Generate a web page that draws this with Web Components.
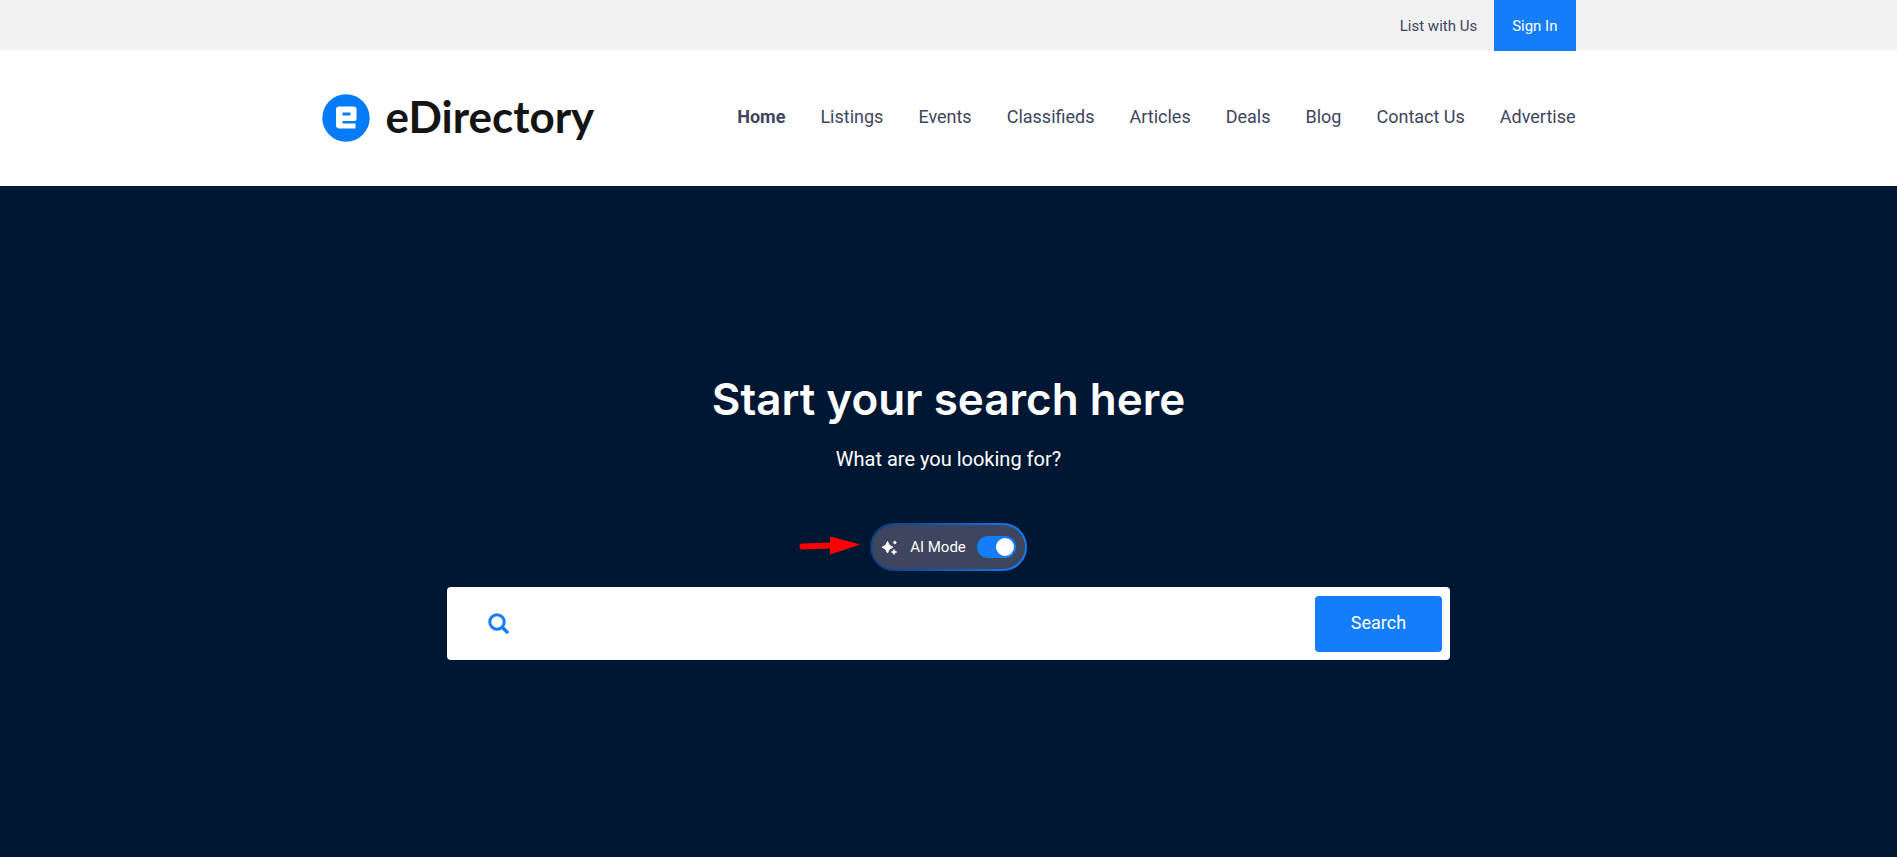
<!DOCTYPE html>
<html lang="en">
<head>
<meta charset="utf-8">
<meta name="viewport" content="width=device-width, initial-scale=1">
<title>eDirectory</title>
<style>
  :root { --blue: #147dfa; --navy: #001733; --slate: #3e455e; --page-width: 1254px; }
  body { margin: 0; font-family: Roboto, "Liberation Sans", sans-serif; color: var(--slate); background: var(--navy); }
</style>
</head>
<body>
<directory-page></directory-page>
<script>
function define(name, html, setup) {
  const template = document.createElement('template');
  template.innerHTML = html;
  customElements.define(name, class extends HTMLElement {
    constructor() {
      super();
      this.attachShadow({ mode: 'open' }).append(template.content.cloneNode(true));
    }
    connectedCallback() { if (setup) setup(this, this.shadowRoot); }
  });
}

define('top-bar', `
<style>
  :host { display: block; background: #f1f1f1; height: 50px; }
  nav { max-width: var(--page-width); margin: 0 auto; display: flex; justify-content: flex-end; align-items: flex-start; gap: 17px; font-size: 15px; line-height: 49px; }
  a { color: inherit; text-decoration: none; padding-top: 2px; }
  .sign { background: var(--blue); color: #fff; padding: 2px 18px 0; }
</style>
<nav aria-label="Account"><a href="#list">List with Us</a><a class="sign" href="#signin">Sign In</a></nav>`);

define('brand-logo', `
<style>
  :host { display: block; }
  a { display: flex; align-items: flex-start; gap: 16px; color: #141414; text-decoration: none; font: 700 44px/44px Lato, sans-serif; }
  svg { display: block; width: 48px; height: 48px; }
</style>
<a href="#home" aria-label="eDirectory">
  <svg viewBox="0 0 48 48" aria-hidden="true"><circle cx="24" cy="24" r="23.7" fill="#047bf8"/>
  <path fill="#fff" fill-rule="evenodd" d="M17 12.500H31.500Q34.500 12.500 34.500 15V25Q34.500 27 32.500 27H20.500V29.500H33.500V34.500H17.500Q14 34.500 14 31V15.500Q14 12.500 17 12.500ZM20.500 18.500V21.500H28.500V18.500Z"/></svg>
  <span>eDirectory</span></a>`);

define('nav-link', `
<style>
  :host { display: block; }
  a { color: inherit; text-decoration: none; white-space: nowrap; }
  :host([current]) a { font-weight: 700; }
</style>
<a><slot></slot></a>`, (host, root) => {
  const a = root.querySelector('a');
  a.href = host.getAttribute('href');
  if (host.hasAttribute('current')) a.setAttribute('aria-current', 'page');
});

define('site-header', `
<style>
  :host { display: block; background: #fff; position: relative; z-index: -1; }
  div { max-width: var(--page-width); margin: 0 auto; padding: 44px 0; display: flex; align-items: center; justify-content: space-between; }
  nav { display: flex; gap: 35px; font-size: 18px; line-height: 24px; padding-bottom: 2px; }
</style>
<div><brand-logo></brand-logo><nav aria-label="Main"><slot></slot></nav></div>`);

define('ai-toggle', `
<style>
  :host { display: block; position: relative; }
  label { display: flex; align-items: center; box-sizing: border-box; height: 48px; padding: 0 9px; border: 2px solid transparent; border-radius: 24px;
    background: linear-gradient(var(--slate), var(--slate)) padding-box, linear-gradient(90deg, #0b3d80, var(--blue)) border-box; color: #fff; font-size: 15px; line-height: 20px; cursor: pointer; }
  .spark { width: 16px; height: 16px; margin-right: 13px; }
  input { appearance: none; margin: 0 0 0 11px; width: 39px; height: 22px; border-radius: 11px; background: #7a8094; display: flex; align-items: center; padding: 2px; box-sizing: border-box; }
  input::before { content: ""; width: 18px; height: 18px; border-radius: 9px; background: #fff; }
  input:checked { background: var(--blue); justify-content: flex-end; }
  .arrow { position: absolute; right: 100%; top: 10px; margin-right: 9px; width: 62px; height: 22px; }
</style>
<svg class="arrow" viewBox="0 0 62 22" aria-hidden="true"><path d="M3.500 13.500L32 12.500" stroke="#f00" stroke-width="6" stroke-linecap="round"/><path d="M31 3.500L61.500 11.500L31 21.500Z" fill="#f00"/></svg>
<label>
  <svg class="spark" viewBox="0 0 16 16" fill="#fff" aria-hidden="true"><path d="M6.500 2.500Q7.500 7.200 12 8.200Q7.500 9.200 6.500 14Q5.500 9.200 1 8.200Q5.500 7.200 6.500 2.500Z" stroke="#fff"/><path d="M13.800 1.500L15.800 3.500L13.800 5.500L11.800 3.500Z"/><path d="M13 10.200Q13.400 12.500 15.800 13Q13.400 13.500 13 15.800Q12.500 13.500 10.200 13Q12.500 12.500 13 10.200Z" stroke="#fff" stroke-width=".5"/></svg>
  <span>AI Mode</span><input type="checkbox" role="switch" checked>
</label>`);

define('search-box', `
<style>
  :host { display: block; width: 100%; max-width: 1003px; }
  form { display: flex; align-items: center; box-sizing: border-box; background: #fff; border-radius: 4px; padding: 8px 8px 8px 41px; height: 73px; }
  svg { width: 21px; height: 21px; flex: none; }
  input { flex: 1; min-width: 0; border: 0; outline: 0; background: none; font: 18px/24px Roboto, sans-serif; color: var(--slate); padding: 0 16px; }
  button { border: 0; border-radius: 4px; background: var(--blue); color: #fff; font: 18px/54px Roboto, sans-serif; width: 127px; padding: 0 0 2px; }
</style>
<form role="search">
  <svg viewBox="0 0 21 21" aria-hidden="true" fill="none" stroke="#147dfa"><circle cx="9" cy="9" r="7.200" stroke-width="3"/><path d="M14.500 14.500L19 19" stroke-width="3.400" stroke-linecap="round"/></svg>
  <input type="text" aria-label="What are you looking for?"><button type="button">Search</button>
</form>`);

define('search-hero', `
<style>
  :host { display: flex; flex-direction: column; align-items: center; flex: 1; background: var(--navy); color: #fff; padding: 189px 24px 64px; box-sizing: border-box; }
  h1 { margin: 0; font: 600 44px/48px Inter, Roboto, sans-serif; text-align: center; }
  p { margin: 24px 0 52px; font-size: 20px; line-height: 24px; }
  search-box { margin-top: 16px; }
</style>
<h1><slot name="title"></slot></h1><p><slot name="lead"></slot></p><ai-toggle></ai-toggle><search-box></search-box>`);

define('directory-page', `
<style>
  :host { display: flex; flex-direction: column; min-height: 100vh; position: relative; z-index: 0; }
</style>
<top-bar></top-bar>
<site-header>
  <nav-link href="#home" current>Home</nav-link><nav-link href="#listings">Listings</nav-link><nav-link href="#events">Events</nav-link><nav-link href="#classifieds">Classifieds</nav-link><nav-link href="#articles">Articles</nav-link><nav-link href="#deals">Deals</nav-link><nav-link href="#blog">Blog</nav-link><nav-link href="#contact">Contact Us</nav-link><nav-link href="#advertise">Advertise</nav-link>
</site-header>
<search-hero><span slot="title">Start your search here</span><span slot="lead">What are you looking for?</span></search-hero>`);
</script>
</body>
</html>
